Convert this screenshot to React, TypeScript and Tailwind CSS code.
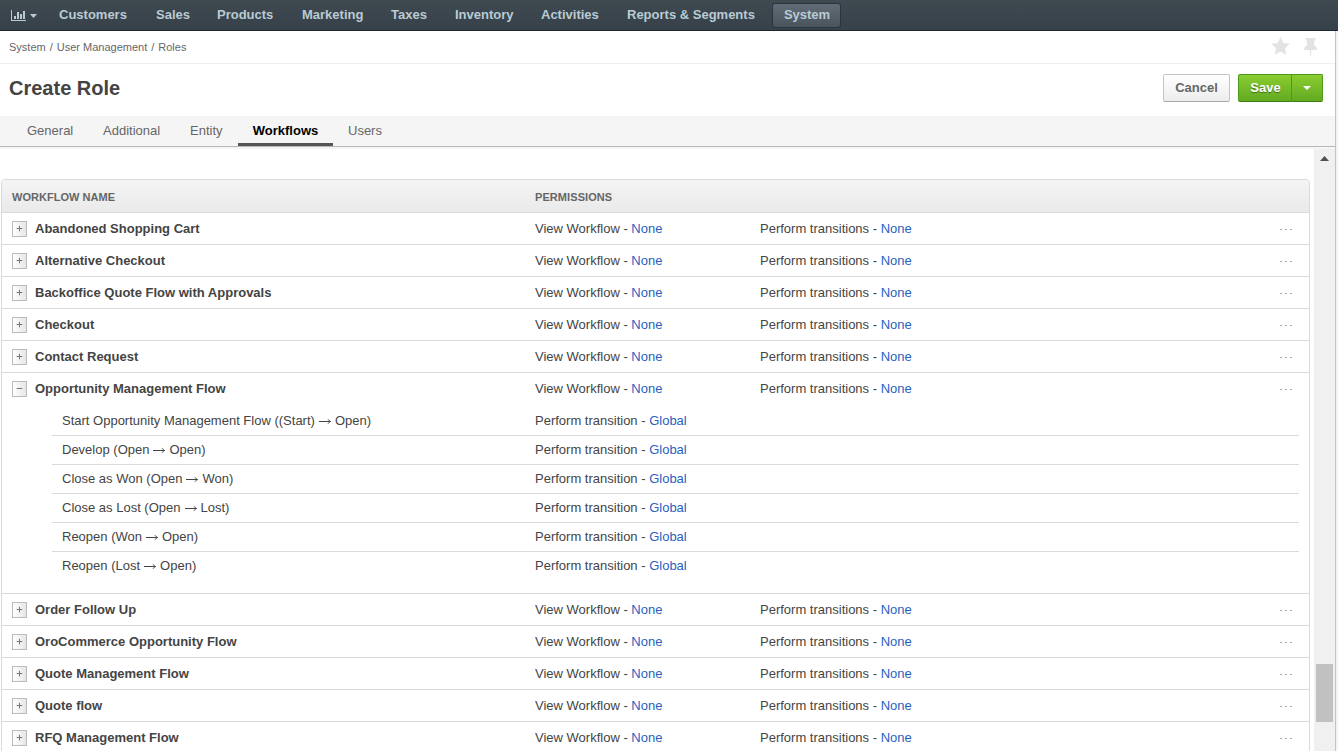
import React from "react";

const nav = [
  { label: "Customers", cls: "w-[97px]" },
  { label: "Sales", cls: "w-[61px]" },
  { label: "Products", cls: "w-[85px]" },
  { label: "Marketing", cls: "w-[89px]" },
  { label: "Taxes", cls: "w-[64px]" },
  { label: "Inventory", cls: "w-[86px]" },
  { label: "Activities", cls: "w-[86px]" },
  { label: "Reports & Segments", cls: "w-[145px]" },
];

const tabs = [
  { label: "General", cls: "w-[76px]" },
  { label: "Additional", cls: "w-[87px]" },
  { label: "Entity", cls: "w-[63px]" },
  { label: "Workflows", cls: "w-[96px]", active: true },
  { label: "Users", cls: "w-[60px]" },
];

const transitions: [string, string, string][] = [
  ["Start Opportunity Management Flow (", "(Start)", "Open"],
  ["Develop (", "Open", "Open"],
  ["Close as Won (", "Open", "Won"],
  ["Close as Lost (", "Open", "Lost"],
  ["Reopen (", "Won", "Open"],
  ["Reopen (", "Lost", "Open"],
];

const workflows = [
  "Abandoned Shopping Cart",
  "Alternative Checkout",
  "Backoffice Quote Flow with Approvals",
  "Checkout",
  "Contact Request",
  "Opportunity Management Flow",
  "Order Follow Up",
  "OroCommerce Opportunity Flow",
  "Quote Management Flow",
  "Quote flow",
  "RFQ Management Flow",
];

function Arrow() {
  return (
    <svg className="mx-[4px] inline-block h-[7px] w-[12px] align-[0px]" viewBox="0 0 12 7" fill="none" stroke="#444">
      <path d="M0 3.5H11.5" />
      <path d="M9 1.2Q9.8 3 11.6 3.5Q9.8 4 9 5.8" strokeWidth="0.9" />
    </svg>
  );
}

function Toggle({ open }: { open: boolean }) {
  return (
    <span className="mr-2 flex h-4 w-[15px] shrink-0 justify-center border border-[#bbb] bg-linear-to-r from-white to-[#e6e6e6] pt-[3px]">
      <svg className="h-[7px] w-[7px]" viewBox="0 0 7 7" stroke="#777">
        <path d={open ? "M0.7 3.5H6.3" : "M0.7 3.5H6.3M3.5 0.7V6.3"} />
      </svg>
    </span>
  );
}

function Workflow({ name }: { name: string }) {
  const open = name === "Opportunity Management Flow";
  return (
    <div className={open ? "h-[221px] border-b border-[#dadada]" : "h-8 border-b border-[#dadada]"}>
      <div className="flex h-[31px] items-center pl-[10px]">
        <div className="flex w-[523px] items-center">
          <Toggle open={open} />
          <span className="font-bold">{name}</span>
        </div>
        <div className="w-[225px]">
          View Workflow - <a className="text-[#2a5fc1]">None</a>
        </div>
        <div className="grow">
          Perform transitions - <a className="text-[#2a5fc1]">None</a>
        </div>
        <div className="mr-[17px] flex gap-[3px] pt-px">
          <span className="h-px w-[2px] bg-[#aaa]" />
          <span className="h-px w-[2px] bg-[#aaa]" />
          <span className="h-px w-[2px] bg-[#aaa]" />
        </div>
      </div>
      {open && (
        <div className="mr-[10px] ml-[50px] pt-[3px]">
          {transitions.map(([title, from, to], i) => (
            <div
              key={i}
              className={
                i < transitions.length - 1
                  ? "flex h-[29px] items-center border-b border-[#dadada] pl-[10px]"
                  : "flex h-[28px] items-center pl-[10px]"
              }
            >
              <div className="w-[473px]">
                {title}
                {from}
                <Arrow />
                {to})
              </div>
              <div>
                Perform transition - <a className="text-[#2a5fc1]">Global</a>
              </div>
            </div>
          ))}
        </div>
      )}
    </div>
  );
}

export default function App() {
  return (
    <div className="flex h-[751px] w-[1338px] flex-col overflow-hidden bg-white font-['Liberation_Sans',Arial,sans-serif] text-[13px] leading-[18px] whitespace-nowrap text-[#444]">
      <header className="flex h-[31px] shrink-0 items-center border-b border-[#1f2733] bg-linear-to-b from-[#3f4950] to-[#37414a] pl-[11px] font-bold text-[#b9cbd3]">
        <div className="flex w-12 items-center gap-1 pt-px">
          <svg className="h-[11px] w-[15px]" viewBox="0 0 15 11" fill="#b9cbd3" shapeRendering="crispEdges">
            <path d="M0 0h1v10h14v1H0zM3 6h2v3H3zM6 2h2v7H6zM9 4h2v5H9zM12 1h2v8h-2z" />
          </svg>
          <svg className="h-1 w-[7px]" viewBox="0 0 7 4" fill="#b9cbd3">
            <path d="M0 0h7L3.5 4z" />
          </svg>
        </div>
        {nav.map((n) => (
          <span key={n.label} className={n.cls}>
            {n.label}
          </span>
        ))}
        <span className="flex h-[25px] w-[69px] items-center justify-center rounded-[3px] border border-[#2b343c] bg-linear-to-b from-[#626c77] to-[#4a545d] pl-px">
          System
        </span>
      </header>

      <div className="flex min-h-0 grow">
        <div className="flex w-[1335px] flex-col">
          <div className="flex h-[33px] shrink-0 items-center justify-between border-b border-[#eee] pr-[18px] pl-[9px] text-[11px] text-[#666]">
            <div className="flex gap-1">
              <span>System</span>
              <span>/</span>
              <span>User Management</span>
              <span>/</span>
              <span>Roles</span>
            </div>
            <div className="flex gap-[14px] pb-[2px]">
              <svg className="h-[18px] w-[19px]" viewBox="0 0 19 18" fill="#e3e3e3">
                <path d="M9.5 0l2.8 6 6.5.8-4.8 4.5 1.3 6.4-5.8-3.2-5.8 3.2L5 11.3.2 6.8 6.7 6z" />
              </svg>
              <svg className="mt-px h-[18px] w-[13px]" viewBox="0 0 13 18" fill="#e3e3e3">
                <path d="M1.5 0h10v2.2h-1.3v5.3q2.8 1 2.8 4.5H7.3l-.5 6h-.6l-.5-6H0q0-3.5 2.8-4.5V2.2H1.5z" />
              </svg>
            </div>
          </div>

          <div className="flex h-[52px] shrink-0 items-center justify-between pr-[12px] pl-[9px]">
            <h1 className="pb-[5px] text-[20px] leading-6 font-bold">Create Role</h1>
            <div className="flex pb-1 font-bold">
              <button className="mr-2 h-7 w-[67px] rounded-[2px] border border-[#c4c4c4] border-b-[#aaa] bg-linear-to-b from-white to-[#ededed] text-[#666]">
                Cancel
              </button>
              <button className="h-7 w-[54px] rounded-l-[2px] border border-[#4a9a1c] border-b-[#3c7d16] bg-linear-to-b from-[#8acc30] to-[#62aa21] pl-px text-white text-shadow-[0_1px_1px_rgba(0,0,0,0.4)]">
                Save
              </button>
              <button className="-ml-px flex h-7 w-8 items-center justify-center rounded-r-[2px] border border-[#4a9a1c] border-b-[#3c7d16] bg-linear-to-b from-[#8acc30] to-[#62aa21]">
                <svg className="h-1 w-2" viewBox="0 0 8 4" fill="#fff">
                  <path d="M0 0h8L4 4z" />
                </svg>
              </button>
            </div>
          </div>

          <nav className="flex h-[31px] shrink-0 border-b border-[#b8b8b8] bg-[#f5f5f5] pl-[27px] text-[#666]">
            {tabs.map((t) =>
              t.active ? (
                <span key={t.label} className="-ml-[15px] mr-[15px] w-[95px] border-b-[3px] border-[#555] pt-[6px] text-center font-bold text-black">
                  {t.label}
                </span>
              ) : (
                <span key={t.label} className={t.cls + " pt-[6px]"}>
                  {t.label}
                </span>
              ),
            )}
          </nav>

          <div className="flex min-h-0 grow border-t-2 border-[#f5f5f5]">
            <main className="w-[1314px] overflow-hidden pt-[30px] pl-px">
              <div className="w-[1309px] rounded-t-[4px] border border-[#dadada]">
                <div className="flex h-[33px] items-center rounded-t-[3px] border-b border-[#dadada] bg-linear-to-b from-[#f4f4f4] to-[#eaeaea] pt-px pl-[10px] text-[11px] font-bold text-[#666]">
                  <span className="w-[523px] tracking-[0.04px]">WORKFLOW NAME</span>
                  <span className="tracking-[0.08px]">PERMISSIONS</span>
                </div>
                {workflows.map((w) => (
                  <Workflow key={w} name={w} />
                ))}
              </div>
            </main>
            <div className="flex w-[21px] flex-col items-center bg-[#f0f0f0] pt-[7px]">
              <svg className="h-[5px] w-[9px]" viewBox="0 0 9 5" fill="#505050">
                <path d="M0 5h9L4.5 0z" />
              </svg>
              <div className="mt-[503px] h-[58px] w-[17px] bg-[#c1c1c1]" />
            </div>
          </div>
        </div>
        <div className="w-[3px] border-l border-[#c4c4c4] bg-[#f3f3f3]" />
      </div>
    </div>
  );
}
